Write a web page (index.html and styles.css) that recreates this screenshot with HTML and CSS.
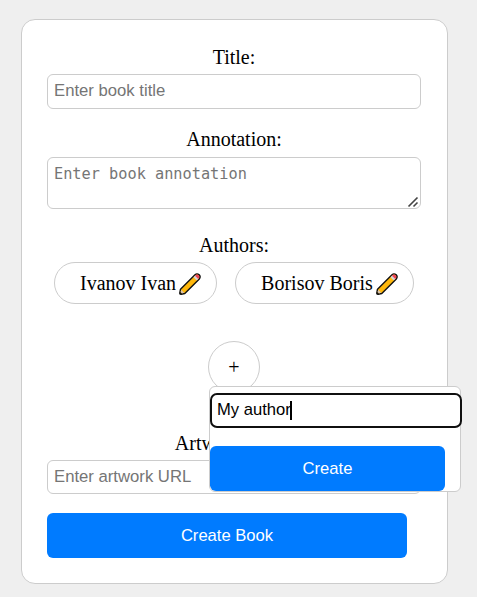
FILE: index.html
```html
<!DOCTYPE html>
<html lang="en">
<head>
<meta charset="utf-8">
<title>Create Book</title>
<link rel="stylesheet" href="styles.css">
</head>
<body>
<svg class="defs" width="0" height="0">
  <symbol id="pencil" viewBox="0 0 24 24">
    <path d="M1.8 20.8 2.5 17.2 17 2.7Q19 1 21.2 2.8Q23 5 21.3 7L6.8 21.5 3.2 22.2Q1.6 22.4 1.8 20.8Z" fill="#ffb80c" stroke="#111" stroke-width="1.4" stroke-linejoin="round"/>
    <path d="M2.6 20.2 3.2 17.8 6.2 20.8 3.8 21.4Z" fill="#d8c4b0"/>
    <path d="M15.5 5.2 17.4 3.3 20.7 6.6 18.8 8.5Z" fill="#d5d5d8"/>
    <path d="M17 3.7 18 2.8Q19.5 2 20.7 3.3Q22 4.6 21.1 6.1L20.3 7Z" fill="#ee4457"/>
    <path d="M1.8 22.2 2.3 20 4 21.7Z" fill="#111"/>
  </symbol>
</svg>
<form class="card">
  <label class="label" for="title">Title:</label>
  <input class="field" id="title" type="text" placeholder="Enter book title">
  <label class="label" for="annotation">Annotation:</label>
  <div class="area">
    <textarea class="field field-area" id="annotation" placeholder="Enter book annotation"></textarea>
    <svg class="grip" viewBox="0 0 12 12"><path d="M1.5 10.5 10.5 1.5M6.5 10.5 10.5 6.5"/></svg>
  </div>
  <div class="label">Authors:</div>
  <div class="authors">
    <div class="chip">Ivanov Ivan<svg class="pencil"><use href="#pencil"/></svg></div>
    <div class="chip">Borisov Boris<svg class="pencil"><use href="#pencil"/></svg></div>
  </div>
  <div class="adder">
    <button class="add" type="button">+</button>
    <div class="popup">
      <div class="name" role="textbox">My author<span class="caret"></span></div>
      <button class="btn" type="button">Create</button>
    </div>
  </div>
  <label class="label" for="artwork">Artwork URL:</label>
  <input class="field field-url" id="artwork" type="text" placeholder="Enter artwork URL">
  <button class="btn btn-book" type="button">Create Book</button>
</form>
</body>
</html>
```
FILE: styles.css
```css
* { box-sizing: border-box; }
body {
  margin: 0;
  padding: 19px 29px 0 21px;
  background: #efefef;
  font: 20px/23px "Liberation Serif", serif;
  color: #000;
  overflow: hidden;
}
.defs { display: block; height: 0; }
.card {
  width: 427px;
  height: 565px;
  padding: 25px 26px 0 25px;
  border: 1px solid #ccc;
  border-radius: 14px;
  background: #fff;
}
.label { display: block; height: 29px; padding-top: 1px; text-align: center; }
.field {
  display: block;
  width: 374px;
  height: 35px;
  margin: 0 0 18px;
  padding: 0 6px 2px;
  border: 1px solid #ccc;
  border-radius: 6px;
  background: #fff;
  font: 16.7px "Liberation Sans", sans-serif;
  outline: none;
}
.field::placeholder { color: #757575; opacity: 1; }
.area { position: relative; margin: 1px 0 24px; }
.field-area {
  height: 52px;
  margin: 0;
  padding: 7px 6px;
  font: 15.25px/19px "DejaVu Sans Mono", monospace;
  resize: none;
}
.grip {
  position: absolute;
  right: 2px;
  bottom: 1px;
  width: 12px;
  height: 12px;
  fill: none;
  stroke: #444;
  stroke-width: 1.6;
}
.authors { display: flex; gap: 18px; padding-left: 7px; }
.chip {
  display: flex;
  align-items: center;
  height: 42px;
  padding: 0 14px 0 25px;
  border: 1px solid #ccc;
  border-radius: 21px;
  white-space: nowrap;
}
.pencil { width: 24px; height: 24px; margin: 2px 0 0 2px; }
.adder { position: relative; width: 52px; margin: 37px auto 38px; }
.add {
  display: block;
  width: 52px;
  height: 52px;
  padding: 0;
  border: 1px solid #ccc;
  border-radius: 50%;
  background: #fff;
  font: 20px "Liberation Serif", serif;
  color: #000;
}
.popup {
  position: absolute;
  top: 45px;
  left: 1px;
  z-index: 1;
  width: 252px;
  height: 106px;
  padding-top: 6px;
  border: 1px solid #ccc;
  border-radius: 6px;
  background: #fff;
}
.name {
  display: flex;
  align-items: center;
  width: 252px;
  height: 35px;
  margin-bottom: 18px;
  padding: 0 5px 1px;
  border: 2px solid #101010;
  border-radius: 7px;
  background: #fff;
  font: 16.6px "Liberation Sans", sans-serif;
}
.caret { width: 2px; height: 19px; margin-left: -1px; background: #000; }
.btn {
  display: block;
  width: 235px;
  height: 45px;
  padding: 0;
  border: 0;
  border-radius: 6px;
  background: #007bff;
  color: #fff;
  font: 16.6px "Liberation Sans", sans-serif;
}
.field-url { height: 34px; margin-bottom: 19px; padding-bottom: 1px; }
.btn-book { width: 360px; }
```
